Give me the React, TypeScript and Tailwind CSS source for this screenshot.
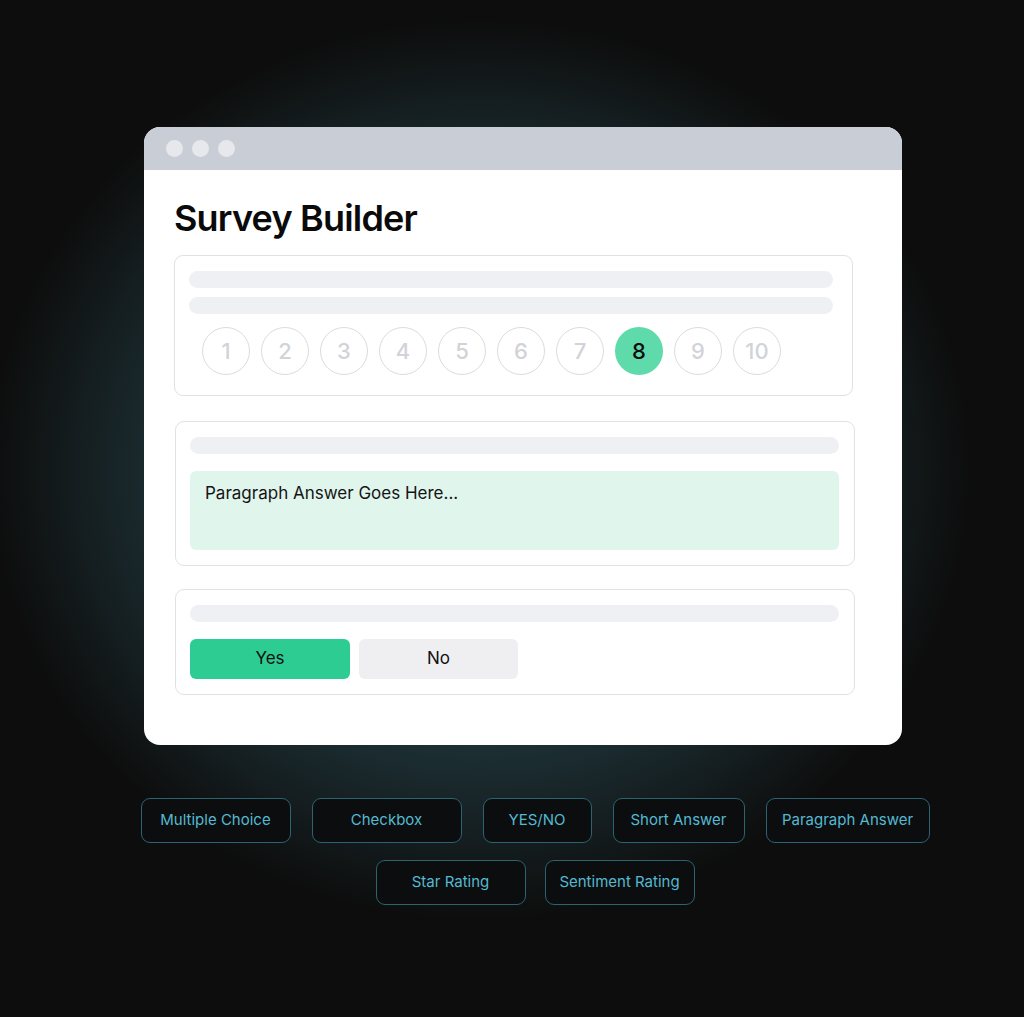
import clsx from 'clsx';

const SCALE = [1, 2, 3, 4, 5, 6, 7, 8, 9, 10];
const QUESTION_TYPES_TOP = [
  { label: 'Multiple Choice', w: 'w-[150px]' },
  { label: 'Checkbox', w: 'w-[150px]' },
  { label: 'YES/NO', w: 'w-[109px]' },
  { label: 'Short Answer', w: 'w-[132px]' },
  { label: 'Paragraph Answer', w: 'w-[164px]' },
];
const QUESTION_TYPES_BOTTOM = [
  { label: 'Star Rating', w: 'w-[150px]' },
  { label: 'Sentiment Rating', w: 'w-[150px]' },
];

function Bar() {
  return <div className="h-[17px] rounded-full bg-[#eff0f3]" />;
}

function Chip({ label, w }: { label: string; w: string }) {
  return (
    <div
      className={clsx(
        'h-[45px] rounded-[9px] border border-[#2b6372] bg-[#0c0d0e] flex items-center justify-center text-[15px] text-[#55b9d2]',
        w
      )}
    >
      {label}
    </div>
  );
}

export default function App() {
  return (
    <div
      className="w-[1024px] h-[1017px] overflow-hidden bg-[#0d0d0d] bg-[radial-gradient(ellipse_490px_450px_at_480px_470px,#27444b_0%,#20373d_52%,#172326_76%,#0d0d0d_100%)] pl-[144px] pt-[127px]"
      style={{ fontFamily: 'Inter, "Noto Sans", sans-serif' }}
    >
      {/* browser window */}
      <div className="w-[758px] h-[618px] rounded-[16px] bg-white overflow-hidden flex flex-col">
        <div className="h-[43px] shrink-0 bg-[#c9ced6] flex items-center gap-[9px] pl-[22px]">
          <span className="w-[17px] h-[17px] rounded-full bg-[#e6e8ec]" />
          <span className="w-[17px] h-[17px] rounded-full bg-[#e6e8ec]" />
          <span className="w-[17px] h-[17px] rounded-full bg-[#e6e8ec]" />
        </div>

        <div className="pl-[30px] pt-[28px] flex flex-col">
          <h1 className="text-[36px] leading-[40px] font-semibold tracking-[-0.8px] text-[#0a0a0a]">Survey Builder</h1>

          {/* rating card */}
          <div className="mt-[17px] w-[679px] h-[141px] rounded-[9px] border-[1.5px] border-[#dfe1e6] pl-[14px] pr-[19px] pt-[15px] flex flex-col">
            <div className="flex flex-col gap-[9px]">
              <Bar />
              <Bar />
            </div>
            <div className="mt-[13px] pl-[13px] flex gap-[11px]">
              {SCALE.map(n => (
                <div
                  key={n}
                  className={clsx(
                    'w-[48px] h-[48px] rounded-full flex items-center justify-center text-[22px] font-medium',
                    n === 8
                      ? 'bg-[#5edaab] text-[#0d0d0d]'
                      : 'border-[1.5px] border-[#dadce1] text-[#d2d3d7]'
                  )}
                >
                  {n}
                </div>
              ))}
            </div>
          </div>

          {/* paragraph card */}
          <div className="mt-[25px] ml-[1px] w-[680px] h-[145px] rounded-[9px] border-[1.5px] border-[#dfe1e6] pl-[14px] pr-[15px] pt-[15px] flex flex-col">
            <Bar />
            <div className="mt-[17px] h-[79px] rounded-[6px] bg-[#e0f5ec] pl-[15px] pt-[10px] text-[17px] text-[#141414]">
              Paragraph Answer Goes Here...
            </div>
          </div>

          {/* yes/no card */}
          <div className="mt-[23px] ml-[1px] w-[680px] h-[106px] rounded-[9px] border-[1.5px] border-[#dfe1e6] pl-[14px] pr-[15px] pt-[15px] flex flex-col">
            <Bar />
            <div className="mt-[17px] flex gap-[9px]">
              <div className="w-[160px] h-[40px] rounded-[6px] bg-[#2dcc92] flex items-center justify-center text-[17px] text-[#111]">
                Yes
              </div>
              <div className="w-[159px] h-[40px] rounded-[6px] bg-[#efeff2] flex items-center justify-center text-[17px] text-[#111]">
                No
              </div>
            </div>
          </div>
        </div>
      </div>

      {/* question types */}
      <div className="ml-[-4px] mt-[53px] w-[790px] flex flex-col items-center gap-[17px]">
        <div className="flex gap-[21px]">
          {QUESTION_TYPES_TOP.map(c => (
            <Chip key={c.label} {...c} />
          ))}
        </div>
        <div className="flex gap-[19px]">
          {QUESTION_TYPES_BOTTOM.map(c => (
            <Chip key={c.label} {...c} />
          ))}
        </div>
      </div>
    </div>
  );
}
